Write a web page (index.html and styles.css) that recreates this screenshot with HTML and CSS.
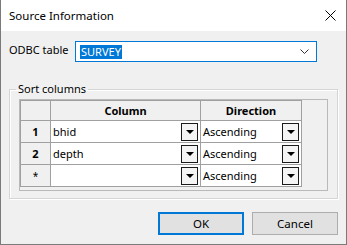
FILE: index.html
```html
<!DOCTYPE html>
<html lang="en">
<head>
    <meta charset="UTF-8">
    <title>Source Information</title>
    <link rel="stylesheet" href="styles.css">
</head>
<body>
    <div class="window">
        <div class="titlebar">
            <span class="title">Source Information</span>
            <svg class="close" width="11" height="11" viewBox="0 0 11 11">
                <path d="M0.5 0.5 L10.5 10.5 M10.5 0.5 L0.5 10.5" stroke="#000" stroke-width="1" fill="none"/>
            </svg>
        </div>
        <div class="content">
            <div class="source">
                <label>ODBC table</label>
                <div class="combo">
                    <span class="selected">SURVEY</span>
                    <svg class="chevron" width="9" height="5" viewBox="0 0 9 5">
                        <path d="M0.5 0.5 L4.5 4.5 L8.5 0.5" stroke="#333" stroke-width="1" fill="none"/>
                    </svg>
                </div>
            </div>
            <fieldset class="group">
                <legend>Sort columns</legend>
                <div class="grid">
                    <table>
                        <tr>
                            <th class="rowhead"></th>
                            <th class="col">Column</th>
                            <th class="dir">Direction</th>
                        </tr>
                        <tr>
                            <td class="rowhead">1</td>
                            <td><div class="cell"><span>bhid</span><span class="drop"></span></div></td>
                            <td><div class="cell"><span>Ascending</span><span class="drop"></span></div></td>
                        </tr>
                        <tr>
                            <td class="rowhead">2</td>
                            <td><div class="cell"><span>depth</span><span class="drop"></span></div></td>
                            <td><div class="cell"><span>Ascending</span><span class="drop"></span></div></td>
                        </tr>
                        <tr>
                            <td class="rowhead star">*</td>
                            <td><div class="cell"><span></span><span class="drop"></span></div></td>
                            <td><div class="cell"><span>Ascending</span><span class="drop"></span></div></td>
                        </tr>
                    </table>
                </div>
            </fieldset>
            <div class="buttons">
                <button class="default">OK</button>
                <button>Cancel</button>
            </div>
        </div>
    </div>
</body>
</html>
```

FILE: styles.css
```css
body {
    margin: 0;
    padding: 0;
    font-family: "Noto Sans", sans-serif;
    font-size: 11px;
    color: #000;
    background-color: #f0f0f0;
}
.window {
    width: 347px;
    height: 245px;
    box-sizing: border-box;
    border: 1px solid #7a7a7a;
    border-top: none;
    background-color: #f0f0f0;
}
.titlebar {
    height: 31px;
    background-color: #fff;
    display: flex;
    align-items: center;
    justify-content: space-between;
    padding: 0 10px 0 8px;
}
.title {
    font-size: 11.5px;
    margin-top: -1px;
}
.close {
    margin-top: -1px;
}
.content {
    padding: 10px 8px 0 8px;
}
.source {
    display: flex;
    align-items: center;
}
.source label {
    width: 66px;
    margin-top: -4px;
}
.combo {
    width: 242px;
    height: 21px;
    box-sizing: border-box;
    border: 1px solid #0078d7;
    background-color: #fff;
    display: flex;
    align-items: center;
    justify-content: space-between;
    padding: 0 7px 0 4px;
}
.selected {
    background-color: #0078d7;
    color: #fff;
    line-height: 14px;
    padding: 0 1px;
}
.group {
    margin: 19px 0 0 0;
    padding: 2px 9px 7px 9px;
    border: 1px solid #d5d5d5;
    box-shadow: 1px 1px 0 #fff, inset 1px 1px 0 #fff;
}
.group legend {
    padding: 0 2px;
    margin-left: -3px;
    line-height: 16px;
}
.grid {
    height: 92px;
    box-sizing: border-box;
    border: 1px solid #b9b9b9;
    background-color: #f0f0f0;
}
table {
    border-collapse: collapse;
}
th, td {
    border: 1px solid #a0a0a0;
    padding: 0;
    font-size: 11px;
}
th {
    height: 19px;
    font-weight: bold;
    background-color: #f0f0f0;
    text-align: center;
}
td {
    height: 21px;
    background-color: #fff;
}
.rowhead {
    width: 29px;
    background-color: #f0f0f0;
    text-align: center;
    font-weight: bold;
}
.star {
    font-weight: normal;
    font-size: 10px;
}
.col {
    width: 149px;
}
.dir {
    width: 100px;
}
.cell {
    display: flex;
    align-items: center;
    justify-content: space-between;
    padding: 0 2px 0 2px;
}
.drop {
    width: 17px;
    height: 18px;
    box-sizing: border-box;
    border: 1px solid #1a1a1a;
    background-color: #f4f4f4;
    display: flex;
    align-items: center;
    justify-content: center;
}
.drop::after {
    content: "";
    border-left: 4px solid transparent;
    border-right: 4px solid transparent;
    border-top: 4px solid #000;
}
.buttons {
    display: flex;
    justify-content: flex-end;
    gap: 8px;
    margin-top: 13px;
}
.buttons button {
    width: 86px;
    height: 23px;
    box-sizing: border-box;
    border: 1px solid #adadad;
    background-color: #e1e1e1;
    font-family: "Noto Sans", sans-serif;
    font-size: 11.5px;
    color: #000;
    padding: 0;
}
.buttons .default {
    border: 2px solid #0078d7;
}
```
